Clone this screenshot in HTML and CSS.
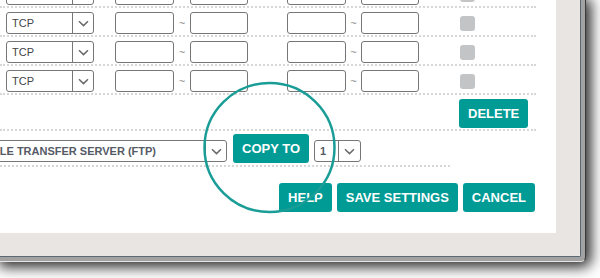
FILE: index.html
```html
<!DOCTYPE html>
<html lang="en">
<head>
<meta charset="utf-8">
<title>Port Forwarding</title>
<link rel="stylesheet" href="styles.css">
</head>
<body>
<div class="window">
  <div class="frame">
    <div class="panel">
      <div class="rules">
        <div class="rule-row">
          <div class="dropdown proto"><span class="dd-text">TCP</span><span class="dd-arrow"><svg width="11" height="7" viewBox="0 0 11 7"><path d="M1 1.2 L5.5 5.6 L10 1.2" fill="none" stroke="#6a6a6a" stroke-width="1.5"/></svg></span></div>
          <div class="field f-a"></div><span class="tilde">~</span><div class="field f-b"></div>
          <div class="field f-c"></div><span class="tilde t-narrow">~</span><div class="field f-b"></div>
          <span class="check"></span>
        </div>
        <div class="rule-row">
          <div class="dropdown proto"><span class="dd-text">TCP</span><span class="dd-arrow"><svg width="11" height="7" viewBox="0 0 11 7"><path d="M1 1.2 L5.5 5.6 L10 1.2" fill="none" stroke="#6a6a6a" stroke-width="1.5"/></svg></span></div>
          <div class="field f-a"></div><span class="tilde">~</span><div class="field f-b"></div>
          <div class="field f-c"></div><span class="tilde t-narrow">~</span><div class="field f-b"></div>
          <span class="check"></span>
        </div>
        <div class="rule-row">
          <div class="dropdown proto"><span class="dd-text">TCP</span><span class="dd-arrow"><svg width="11" height="7" viewBox="0 0 11 7"><path d="M1 1.2 L5.5 5.6 L10 1.2" fill="none" stroke="#6a6a6a" stroke-width="1.5"/></svg></span></div>
          <div class="field f-a"></div><span class="tilde">~</span><div class="field f-b"></div>
          <div class="field f-c"></div><span class="tilde t-narrow">~</span><div class="field f-b"></div>
          <span class="check"></span>
        </div>
        <div class="rule-row">
          <div class="dropdown proto"><span class="dd-text">TCP</span><span class="dd-arrow"><svg width="11" height="7" viewBox="0 0 11 7"><path d="M1 1.2 L5.5 5.6 L10 1.2" fill="none" stroke="#6a6a6a" stroke-width="1.5"/></svg></span></div>
          <div class="field f-a"></div><span class="tilde">~</span><div class="field f-b"></div>
          <div class="field f-c"></div><span class="tilde t-narrow">~</span><div class="field f-b"></div>
          <span class="check"></span>
        </div>
        <div class="rule-row action-row">
          <button class="btn">DELETE</button>
        </div>
      </div>

      <div class="copy-row">
        <div class="dropdown service"><span class="dd-text strong">FILE TRANSFER SERVER (FTP)</span><span class="dd-arrow"><svg width="11" height="7" viewBox="0 0 11 7"><path d="M1 1.2 L5.5 5.6 L10 1.2" fill="none" stroke="#6a6a6a" stroke-width="1.5"/></svg></span></div>
        <button class="btn copy-btn">COPY TO</button>
        <div class="dropdown num"><span class="dd-text strong">1</span><span class="dd-arrow"><svg width="11" height="7" viewBox="0 0 11 7"><path d="M1 1.2 L5.5 5.6 L10 1.2" fill="none" stroke="#6a6a6a" stroke-width="1.5"/></svg></span></div>
      </div>

      <div class="footer">
        <button class="btn">HELP</button>
        <button class="btn">SAVE SETTINGS</button>
        <button class="btn">CANCEL</button>
      </div>

      <svg class="highlight" width="140" height="140" viewBox="0 0 140 140"><ellipse cx="69.5" cy="67.5" rx="65" ry="64.5" fill="none" stroke="#1a9d97" stroke-width="2.5"/></svg>
    </div>
  </div>
</div>
</body>
</html>
```

FILE: styles.css
```css
html, body {
  margin: 0;
  padding: 0;
  background: #ffffff;
  overflow: hidden;
}

body {
  width: 600px;
  height: 278px;
  font-family: "Liberation Sans", Arial, sans-serif;
}

.window {
  width: 586px;
  height: 262px;
  box-sizing: border-box;
  background: #a2a2a2;
  border-right: 1px solid #3a3a3a;
  border-bottom: 1px solid #e4e4e4;
  padding: 0 4px 4px 0;
  border-bottom-right-radius: 5px;
  box-shadow: 2px 2px 14px 3px rgba(0, 0, 0, 0.85);
}

.frame {
  height: 100%;
  box-sizing: border-box;
  background: #e8e5e2;
  border-right: 1px solid #5c6872;
  border-bottom: 1px solid #5c6872;
  padding: 0 24px 23px 0;
  border-bottom-right-radius: 2px;
}

.panel {
  position: relative;
  width: 556px;
  height: 233px;
  background: #ffffff;
  overflow: hidden;
  display: flex;
  flex-direction: column;
}

.rules {
  width: 536px;
  margin-top: -21px;
}

.rule-row {
  display: flex;
  align-items: center;
  padding: 4px 0 1px 6px;
  border-bottom: 2px dotted #d7d7d7;
}

.action-row {
  padding-left: 459px;
}

.dropdown {
  display: flex;
  height: 22px;
  box-sizing: border-box;
  border: 1px solid #767676;
  border-radius: 3px;
  background: #fff;
}

.dd-text {
  flex: 1;
  padding-left: 5px;
  font-size: 11px;
  line-height: 20px;
  color: #444;
  white-space: nowrap;
  overflow: hidden;
}

.dd-text.strong {
  font-weight: bold;
  color: #555b66;
}

.dd-arrow {
  width: 20px;
  border-left: 1px solid #767676;
  display: flex;
  align-items: center;
  justify-content: center;
}

.proto {
  width: 88px;
}

.field {
  height: 22px;
  box-sizing: border-box;
  border: 1px solid #767676;
  border-radius: 3px;
  background: #fff;
}

.f-a {
  width: 59px;
  margin-left: 21px;
}

.f-b {
  width: 58px;
}

.f-c {
  width: 59px;
  margin-left: 39px;
}

.tilde {
  width: 16px;
  text-align: center;
  font-size: 11px;
  line-height: 22px;
  color: #8a8a8a;
}

.t-narrow {
  width: 15px;
}

.check {
  width: 15px;
  height: 15px;
  margin-left: 41px;
  border-radius: 3px;
  background: #c2c4c6;
}

.btn {
  height: 29px;
  padding: 0 9px;
  border: none;
  border-radius: 3px;
  background: #009b95;
  color: #ffffff;
  font-family: "Liberation Sans", Arial, sans-serif;
  font-weight: bold;
  font-size: 13px;
  line-height: 29px;
  cursor: pointer;
}

.copy-row {
  display: flex;
  align-items: flex-start;
  width: 450px;
  padding: 3px 0 2px 0;
  border-bottom: 2px dotted #d7d7d7;
}

.service {
  width: 243px;
  margin-left: -16px;
  margin-top: 6px;
}

.copy-btn {
  margin-left: 6px;
}

.num {
  width: 47px;
  margin-left: 5px;
  margin-top: 6px;
}

.num .dd-arrow {
  width: 21px;
}

.footer {
  display: flex;
  justify-content: flex-end;
  gap: 5px;
  width: 535px;
  margin-top: 16px;
}

.highlight {
  position: absolute;
  left: 200px;
  top: 80px;
  pointer-events: none;
}
```
